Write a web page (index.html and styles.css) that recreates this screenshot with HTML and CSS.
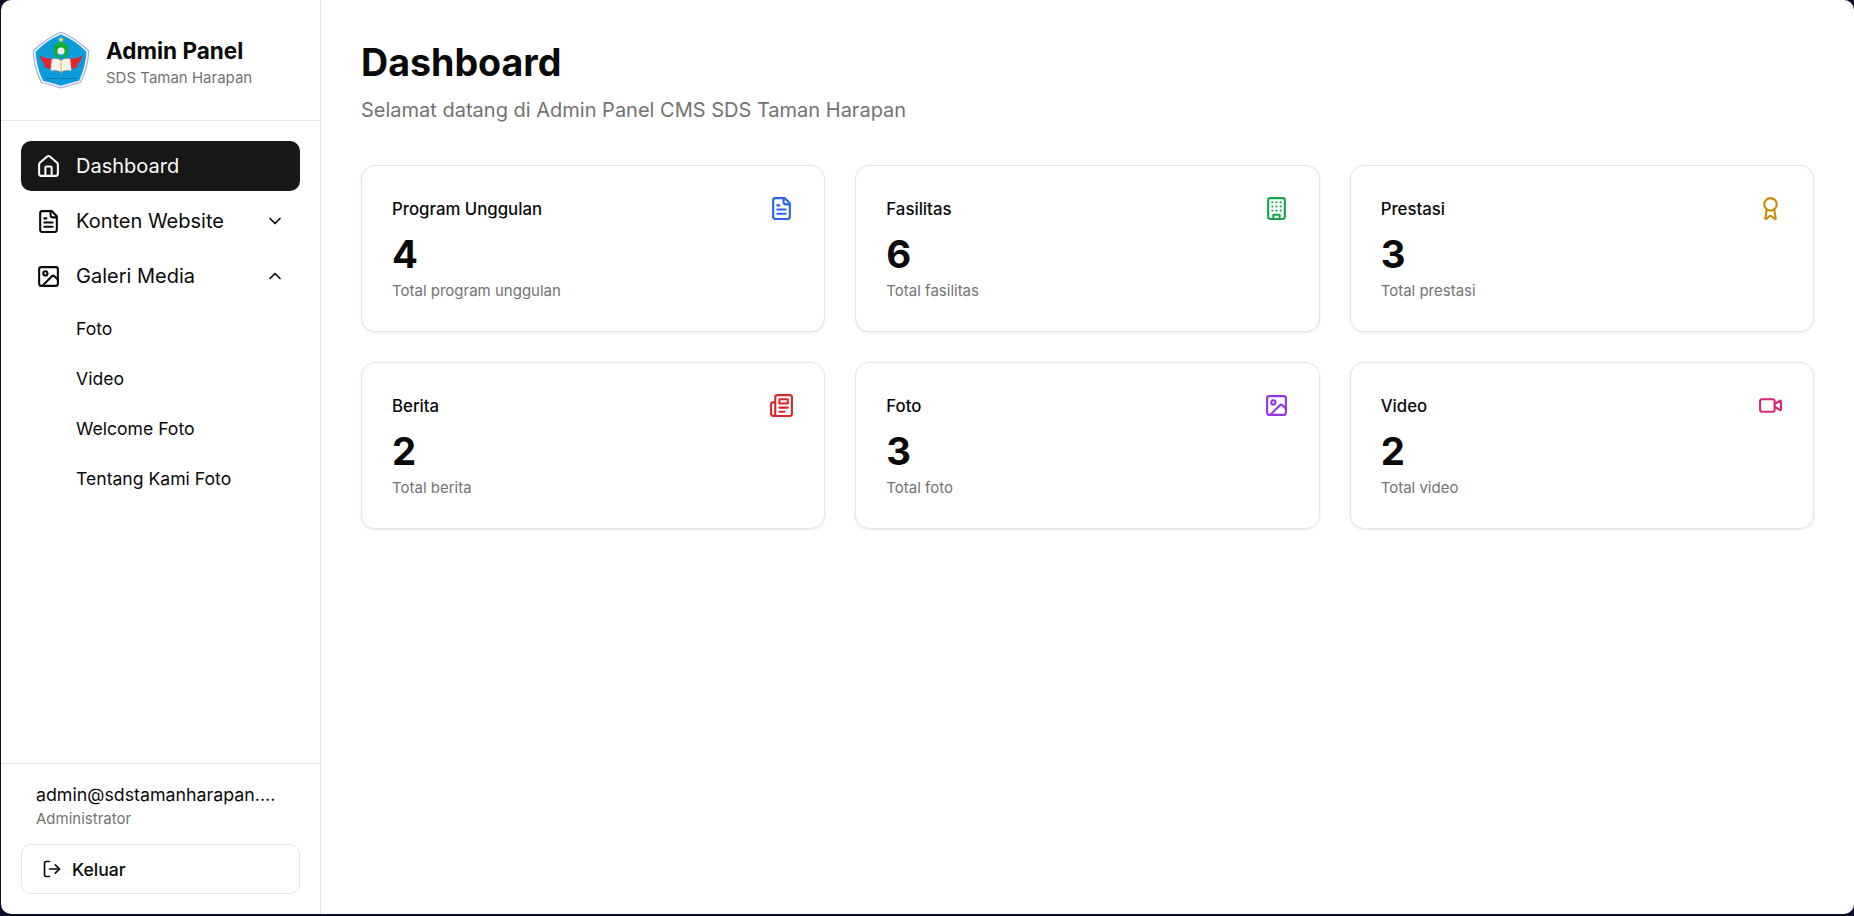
FILE: index.html
```html
<!DOCTYPE html>
<html lang="id">
<head>
<meta charset="utf-8">
<title>Dashboard</title>
<link rel="stylesheet" href="styles.css">
</head>
<body>
<div class="window">
  <aside class="sidebar">
    <header class="brand">
      <svg class="logo" viewBox="0 0 58 58">
        <path d="M29 1.200Q44 7 56.800 20Q56 37 48.500 51.500Q38 54 29 57Q20 54 9.500 51.500Q2 37 1.200 20Q14 7 29 1.200Z" fill="#f4f5fb" stroke="#a9aed9" stroke-width="1.200"/>
        <path d="M29 3.500Q43 9 54.500 20.800Q53.500 36.500 47 49.800Q37.500 52 29 54.800Q20.500 52 11 49.800Q4.500 36.500 3.500 20.800Q15 9 29 3.500Z" fill="#0d9cdb"/>
        <path d="M29 5.500l.9 2 2.100.2-1.600 1.400.5 2.100-1.900-1.100-1.900 1.100.5-2.100-1.600-1.400 2.100-.2Z" fill="#f2dc55"/>
        <path d="M29 11c-4.500.5-7.500 3.500-7.500 8.500 0 3.500 1.700 6.300 4 8l2.500-1.800c-1.900-1.200-2.800-3-2.800-5.400 0-2.200 1.600-3.600 3.800-3.600s3.800 1.400 3.800 3.600c0 2.400-.9 4.200-2.800 5.400l2.500 1.800c2.300-1.700 4-4.500 4-8 0-5-3-8-7.500-8.500Z" fill="#18ad2c"/>
        <circle cx="29" cy="20" r="3.600" fill="#f3ece8"/>
        <path d="M7.500 24.500c3.500 2.200 8 3.200 13 3.300l-.5 10c-4.500 0-7.500-1.200-9-4 1.100.3 2 .2 2.700-.1-3-1.500-5-4.500-6.200-9.200Z" fill="#e8242b"/>
        <path d="M50.500 24.500c-3.500 2.200-8 3.200-13 3.300l.5 10c4.500 0 7.500-1.200 9-4-1.100.3-2 .2-2.700-.1 3-1.500 5-4.500 6.200-9.200Z" fill="#e8242b"/>
        <path d="M19.500 28c4-1 7.500-.5 9.500 1.500 2-2 5.500-2.500 9.500-1.500l1 12c-4-1-7.500-.5-10.500 1-3-1.500-6.500-2-10.500-1Z" fill="#f6f1ea" stroke="#77736e" stroke-width=".5"/>
        <path d="M28.700 29h.8v13.500l-.4 1-.4-1Z" fill="#d9a531"/>
        <text class="logo-text" x="29" y="48" text-anchor="middle">SD TAMAN HARAPAN</text>
      </svg>
      <div class="brand-text">
        <div class="brand-name">Admin Panel</div>
        <div class="brand-sub">SDS Taman Harapan</div>
      </div>
    </header>

    <nav class="nav">
      <a class="nav-item active">
        <svg class="ico" viewBox="0 0 24 24"><path d="M15 21v-8a1 1 0 0 0-1-1h-4a1 1 0 0 0-1 1v8"/><path d="M3 10a2 2 0 0 1 .709-1.528l7-5.999a2 2 0 0 1 2.582 0l7 5.999A2 2 0 0 1 21 10v9a2 2 0 0 1-2 2H5a2 2 0 0 1-2-2z"/></svg>
        <span class="nav-label">Dashboard</span>
      </a>
      <a class="nav-item">
        <svg class="ico" viewBox="0 0 24 24"><path d="M15 2H6a2 2 0 0 0-2 2v16a2 2 0 0 0 2 2h12a2 2 0 0 0 2-2V7Z"/><path d="M14 2v4a2 2 0 0 0 2 2h4"/><path d="M10 9H8"/><path d="M16 13H8"/><path d="M16 17H8"/></svg>
        <span class="nav-label">Konten Website</span>
        <svg class="chev" viewBox="0 0 24 24"><path d="m6 9 6 6 6-6"/></svg>
      </a>
      <a class="nav-item">
        <svg class="ico" viewBox="0 0 24 24"><rect width="18" height="18" x="3" y="3" rx="2" ry="2"/><circle cx="9" cy="9" r="2"/><path d="m21 15-3.086-3.086a2 2 0 0 0-2.828 0L6 21"/></svg>
        <span class="nav-label">Galeri Media</span>
        <svg class="chev" viewBox="0 0 24 24"><path d="m18 15-6-6-6 6"/></svg>
      </a>
      <div class="subnav">
        <a class="sub-item">Foto</a>
        <a class="sub-item">Video</a>
        <a class="sub-item">Welcome Foto</a>
        <a class="sub-item">Tentang Kami Foto</a>
      </div>
    </nav>

    <footer class="side-foot">
      <div class="user">
        <div class="user-mail">admin@sdstamanharapan....</div>
        <div class="user-role">Administrator</div>
      </div>
      <button class="logout">
        <svg class="logout-ico" viewBox="0 0 24 24"><path d="M9 21H5a2 2 0 0 1-2-2V5a2 2 0 0 1 2-2h4"/><path d="m16 17 5-5-5-5"/><path d="M21 12H9"/></svg>
        <span>Keluar</span>
      </button>
    </footer>
  </aside>

  <main class="main">
    <h1 class="title">Dashboard</h1>
    <p class="subtitle">Selamat datang di Admin Panel CMS SDS Taman Harapan</p>
    <section class="cards">
      <article class="card">
        <div class="card-head"><span class="card-title">Program Unggulan</span>
          <svg class="card-ico blue" viewBox="0 0 24 24"><path d="M15 2H6a2 2 0 0 0-2 2v16a2 2 0 0 0 2 2h12a2 2 0 0 0 2-2V7Z"/><path d="M14 2v4a2 2 0 0 0 2 2h4"/><path d="M10 9H8"/><path d="M16 13H8"/><path d="M16 17H8"/></svg></div>
        <div class="card-num">4</div>
        <div class="card-note">Total program unggulan</div>
      </article>
      <article class="card">
        <div class="card-head"><span class="card-title">Fasilitas</span>
          <svg class="card-ico green" viewBox="0 0 24 24"><rect width="16" height="20" x="4" y="2" rx="2" ry="2"/><path d="M9 22v-4h6v4"/><path d="M8 6h.01"/><path d="M16 6h.01"/><path d="M12 6h.01"/><path d="M12 10h.01"/><path d="M12 14h.01"/><path d="M16 10h.01"/><path d="M16 14h.01"/><path d="M8 10h.01"/><path d="M8 14h.01"/></svg></div>
        <div class="card-num">6</div>
        <div class="card-note">Total fasilitas</div>
      </article>
      <article class="card">
        <div class="card-head"><span class="card-title">Prestasi</span>
          <svg class="card-ico amber" viewBox="0 0 24 24"><path d="m15.477 12.890 1.515 8.526a.5.5 0 0 1-.81.470l-3.580-2.687a1 1 0 0 0-1.197 0l-3.586 2.686a.5.5 0 0 1-.810-.469l1.514-8.526"/><circle cx="12" cy="8" r="6"/></svg></div>
        <div class="card-num">3</div>
        <div class="card-note">Total prestasi</div>
      </article>
      <article class="card">
        <div class="card-head"><span class="card-title">Berita</span>
          <svg class="card-ico red" viewBox="0 0 24 24"><path d="M4 22h16a2 2 0 0 0 2-2V4a2 2 0 0 0-2-2H8a2 2 0 0 0-2 2v16a2 2 0 0 1-2 2Zm0 0a2 2 0 0 1-2-2v-9c0-1.100.9-2 2-2h2"/><path d="M18 14h-8"/><path d="M15 18h-5"/><path d="M10 6h8v4h-8V6Z"/></svg></div>
        <div class="card-num">2</div>
        <div class="card-note">Total berita</div>
      </article>
      <article class="card">
        <div class="card-head"><span class="card-title">Foto</span>
          <svg class="card-ico purple" viewBox="0 0 24 24"><rect width="18" height="18" x="3" y="3" rx="2" ry="2"/><circle cx="9" cy="9" r="2"/><path d="m21 15-3.086-3.086a2 2 0 0 0-2.828 0L6 21"/></svg></div>
        <div class="card-num">3</div>
        <div class="card-note">Total foto</div>
      </article>
      <article class="card">
        <div class="card-head"><span class="card-title">Video</span>
          <svg class="card-ico pink" viewBox="0 0 24 24"><path d="m16 13 5.223 3.482a.5.5 0 0 0 .777-.416V7.870a.5.5 0 0 0-.752-.432L16 10.500"/><rect x="2" y="6" width="14" height="12" rx="2"/></svg></div>
        <div class="card-num">2</div>
        <div class="card-note">Total video</div>
      </article>
    </section>
  </main>
</div>
</body>
</html>
```

FILE: styles.css
```css
* { box-sizing: border-box; }
html, body { margin: 0; height: 100%; }
body {
  background: #0b0f2a;
  font-family: Inter, "Liberation Sans", sans-serif;
  color: #0a0a0a;
  padding: 0 0 2px 1px;
  overflow: hidden;
}
.window {
  display: flex;
  height: 100%;
  background: #fff;
  border-radius: 10px;
  overflow: hidden;
}

/* Sidebar */
.sidebar {
  width: 320px;
  flex: none;
  display: flex;
  flex-direction: column;
  border-right: 1px solid #e5e5e5;
}
.brand {
  height: 121px;
  flex: none;
  display: flex;
  align-items: center;
  gap: 16px;
  padding: 0 0 0 31px;
  border-bottom: 1px solid #e5e5e5;
}
.logo { width: 58px; height: 58px; flex: none; }
.logo-text { font-family: "Liberation Serif", serif; font-size: 2.800px; font-weight: 700; fill: #1a1a3c; }
.brand-text { padding-top: 6px; }
.brand-name { font-size: 22.500px; font-weight: 700; line-height: 30px; color: #0a0a0a; }
.brand-sub { font-size: 15px; line-height: 24px; color: #737373; }

.nav {
  flex: 1;
  display: flex;
  flex-direction: column;
  gap: 5px;
  padding: 20px;
}
.nav-item {
  height: 50px;
  flex: none;
  display: flex;
  align-items: center;
  gap: 15px;
  padding: 0 15px;
  border-radius: 10px;
  font-size: 20px;
  color: #0a0a0a;
}
.nav-item.active { background: #171717; color: #fafafa; }
.nav-label { flex: 1; }
.ico { width: 25px; height: 25px; fill: none; stroke: currentColor; stroke-width: 2; stroke-linecap: round; stroke-linejoin: round; flex: none; }
.chev { width: 20px; height: 20px; fill: none; stroke: currentColor; stroke-width: 2; stroke-linecap: round; stroke-linejoin: round; flex: none; }
.subnav { display: flex; flex-direction: column; margin-top: -3px; }
.sub-item {
  height: 50px;
  display: flex;
  align-items: center;
  padding-left: 55px;
  font-size: 17.600px;
  color: #0a0a0a;
}

.side-foot {
  border-top: 1px solid #e5e5e5;
  padding: 17px 20px 20px;
}
.user { padding: 0 15px; margin-bottom: 15px; }
.user-mail { font-size: 17.800px; line-height: 28px; color: #0a0a0a; white-space: nowrap; }
.user-role { font-size: 15px; line-height: 20px; color: #737373; }
.logout {
  width: 100%;
  height: 50px;
  display: flex;
  align-items: center;
  gap: 10px;
  padding: 0 20px;
  background: #fff;
  border: 1px solid #e5e5e5;
  border-radius: 10px;
  font: 500 17.600px Inter, "Liberation Sans", sans-serif;
  color: #0a0a0a;
}
.logout-ico { width: 20px; height: 20px; fill: none; stroke: currentColor; stroke-width: 2; stroke-linecap: round; stroke-linejoin: round; }

/* Main */
.main { flex: 1; min-width: 0; padding: 40px; }
.title { margin: 0; font-size: 37.600px; line-height: 46px; font-weight: 700; color: #0a0a0a; }
.subtitle { margin: 10px 0 0; font-size: 20px; line-height: 28px; color: #737373; }
.cards {
  margin-top: 41px;
  display: grid;
  grid-template-columns: repeat(3, 1fr);
  gap: 30px;
}
.card {
  height: 167px;
  padding: 30px;
  border: 1px solid #e5e5e5;
  border-radius: 14px;
  background: #fff;
  box-shadow: 0 1px 3px rgba(0, 0, 0, .08);
}
.card-head { display: flex; justify-content: space-between; align-items: center; height: 24px; }
.card-title { padding-top: 1px; font-size: 16.800px; font-weight: 500; color: #0a0a0a; }
.card-ico { width: 25px; height: 25px; fill: none; stroke-width: 2; stroke-linecap: round; stroke-linejoin: round; stroke: currentColor; }
.blue { color: #2563eb; }
.green { color: #16a34a; }
.amber { color: #ca8a04; }
.red { color: #dc2626; }
.purple { color: #9333ea; }
.pink { color: #db2777; }
.card-num { margin-top: 10px; font-size: 38.400px; line-height: 48px; font-weight: 700; color: #0a0a0a; }
.card-note { margin-top: 3px; font-size: 15px; line-height: 20px; color: #737373; }
```
